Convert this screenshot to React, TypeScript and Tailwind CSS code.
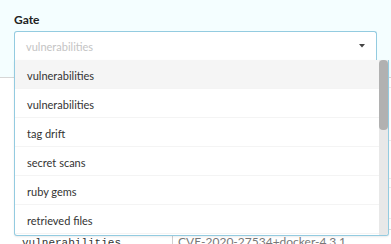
import { useState } from 'react';

const options = ['vulnerabilities', 'vulnerabilities', 'tag drift', 'secret scans', 'ruby gems', 'retrieved files'];

function TableBehind() {
    // rows of the policy table that sit under the open menu
    return (
        <div className="flex flex-col">
            <div className="h-[10px] border-b border-[#ececec]" />
            <div className="h-[53px] border-b border-[#ececec]" />
            <div className="h-[38px] border-b border-[#ececec]" />
            <div className="h-[9px] border-b border-[#ececec]" />
            <div className="h-[31px] border-b border-[#ececec]" />
            <div className="h-[11px] border-b border-[#dcdcdc]" />
            <div className="flex h-[20px]">
                <div className="w-[158px] pl-[8px] pt-[6px] font-['Liberation_Mono',monospace] text-[11px] leading-[14px] text-[#333]">
                    vulnerabilities
                </div>
                <div className="border-l border-[#cfcfcf] pl-[5px] pt-[4px] text-[12px] leading-[16px] text-[#777]">
                    CVE-2020-27534+docker-4.3.1
                </div>
            </div>
        </div>
    );
}

export default function App() {
    const [active] = useState(0);

    return (
        <div className="relative h-[244px] w-[391px] overflow-hidden bg-white font-['Lato','Liberation_Sans',sans-serif]">
            <div className="h-[78px] border-b border-[#d6d6d6] bg-[#f4feff] px-[14px] pt-[12px]">
                <div className="text-[12px] font-bold leading-[15px] text-[#222]">Gate</div>
                <div className="mt-[4px] flex h-[29px] items-center justify-between rounded-t-[3px] border border-b-0 border-[#93cbe0] bg-white pl-[11px] pr-[11px] pt-[2px]">
                    <span className="text-[11px] text-[#c4c4c4]">vulnerabilities</span>
                    <svg width="6" height="4" viewBox="0 0 6 4" className="mb-[2px]">
                        <path d="M0 0h6L3 3.5z" fill="#444" />
                    </svg>
                </div>
            </div>
            <div className="pl-[14px]">
                <TableBehind />
            </div>

            {/* open menu */}
            <div className="absolute left-[14px] top-[60px] flex h-[176px] w-[375px] overflow-hidden rounded-b-[3px] border border-t-0 border-[#93cbe0] bg-white shadow-[0_1px_2px_rgba(0,0,0,0.08)]">
                <div className="flex flex-1 flex-col">
                    {options.map((o, i) => (
                        <div
                            key={i}
                            className={`flex h-[29px] shrink-0 items-center border-b border-[#f4f4f4] pl-[12px] pt-[4px] text-[11px] text-[#333] ${i === active ? 'bg-[#f5f5f5]' : ''}`}
                        >
                            {o}
                        </div>
                    ))}
                </div>
                <div className="w-[9px] shrink-0 bg-[#e8e8e8]">
                    <div className="h-[70px] rounded-[4px] bg-[#b1b1b1]" />
                </div>
            </div>
        </div>
    );
}
